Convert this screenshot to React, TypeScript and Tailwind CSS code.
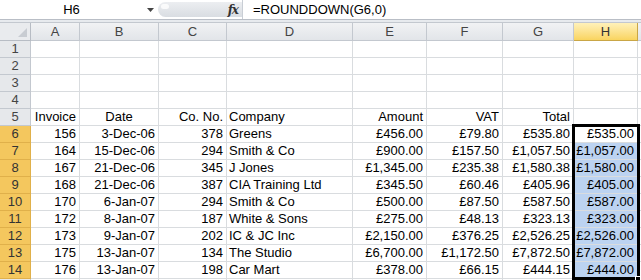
import React from "react";

type Row = { n: number; cells: string[] };

const rows: Row[] = [
  { n: 1, cells: [] },
  { n: 2, cells: [] },
  { n: 3, cells: [] },
  { n: 4, cells: [] },
  { n: 5, cells: ["Invoice", "Date", "Co. No.", "Company", "Amount", "VAT", "Total", ""] },
  { n: 6, cells: ["156", "3-Dec-06", "378", "Greens", "£456.00", "£79.80", "£535.80", "£535.00"] },
  { n: 7, cells: ["164", "15-Dec-06", "294", "Smith & Co", "£900.00", "£157.50", "£1,057.50", "£1,057.00"] },
  { n: 8, cells: ["167", "21-Dec-06", "345", "J Jones", "£1,345.00", "£235.38", "£1,580.38", "£1,580.00"] },
  { n: 9, cells: ["168", "21-Dec-06", "387", "CIA Training Ltd", "£345.50", "£60.46", "£405.96", "£405.00"] },
  { n: 10, cells: ["170", "6-Jan-07", "294", "Smith & Co", "£500.00", "£87.50", "£587.50", "£587.00"] },
  { n: 11, cells: ["172", "8-Jan-07", "187", "White & Sons", "£275.00", "£48.13", "£323.13", "£323.00"] },
  { n: 12, cells: ["173", "9-Jan-07", "202", "IC & JC Inc", "£2,150.00", "£376.25", "£2,526.25", "£2,526.00"] },
  { n: 13, cells: ["175", "13-Jan-07", "134", "The Studio", "£6,700.00", "£1,172.50", "£7,872.50", "£7,872.00"] },
  { n: 14, cells: ["176", "13-Jan-07", "198", "Car Mart", "£378.00", "£66.15", "£444.15", "£444.00"] },
];

const letters = ["A", "B", "C", "D", "E", "F", "G", "H"];
const gridCols = "grid grid-cols-[31px_49px_79px_68px_126px_74px_76px_71px_64px_1fr]";

// column D (index 3) is text, others right aligned; row 5 Date header centred
const align = (row: number, col: number) => {
  if (col === 3) return "justify-start pl-[2px]";
  if (row === 5 && col === 1) return "justify-center";
  return "justify-end pr-[3px]";
};

const FormulaBar = () => (
  <div className="flex h-[20px] border-b border-[#b9bec6] bg-white">
    <div className="w-[143px] flex items-center justify-center text-[13px] text-black">H6</div>
    <div className="w-[15px] flex items-center justify-center">
      <svg width="7" height="4" viewBox="0 0 7 4">
        <path d="M0 0h7L3.5 4z" fill="#444" />
      </svg>
    </div>
    <div className="relative w-[84px] my-[2px] rounded-l-full bg-gradient-to-b from-[#eceef1] to-[#d9dde2] flex items-center justify-end pr-[4px]">
      <div className="absolute left-[3px] top-[2px] w-[8px] h-[5px] rounded-full bg-white/80" />
      <span className="font-['DejaVu_Serif',serif] italic font-bold text-[12px] text-[#333] tracking-[-1px]">fx</span>
    </div>
    <div className="w-[3px] border-l border-[#c9ced5]" />
    <div className="flex-1 flex items-center pl-[8px] text-[13px] text-black">=ROUNDDOWN(G6,0)</div>
  </div>
);

const HeaderRow = () => (
  <div className={`${gridCols} h-[18px]`}>
    <div className="relative bg-[#e9ebee] border-r border-b border-[#b7bcc4]">
      <svg className="absolute right-[3px] bottom-[3px]" width="9" height="9" viewBox="0 0 9 9">
        <path d="M9 0V9H0z" fill="#c8ccd2" />
      </svg>
    </div>
    {letters.map((l) => (
      <div
        key={l}
        className={
          l === "H"
            ? "flex items-center justify-center bg-gradient-to-b from-[#fff1b9] to-[#f9d45e] border-r border-b border-[#c9a646] text-[#333]"
            : "flex items-center justify-center bg-gradient-to-b from-[#f1f2f4] to-[#e2e5e9] border-r border-b border-[#c3c8cf] text-[#444]"
        }
      >
        {l}
      </div>
    ))}
    <div className="bg-gradient-to-b from-[#f1f2f4] to-[#e2e5e9] border-b border-[#c3c8cf]" />
  </div>
);

const App: React.FC = () => {
  return (
    <div className="relative w-[641px] h-[280px] overflow-hidden bg-white font-['Liberation_Sans',Arial,sans-serif] text-[13px] leading-[16px]">
      <FormulaBar />
      <div className="h-[3px] bg-[#e7eaee] border-b border-[#c3c8cf]" />
      <HeaderRow />
      {rows.map((r) => {
        const selected = r.n >= 6 && r.n <= 14;
        return (
          <div key={r.n} className={`${gridCols} h-[17px]`}>
            <div
              className={
                selected
                  ? "flex items-center justify-center bg-[#f4c75e] border-r border-b border-[#e0b04a] text-[#333]"
                  : "flex items-center justify-center bg-[#e6e8eb] border-r border-b border-[#c3c8cf] text-[#444]"
              }
            >
              {r.n}
            </div>
            {letters.map((_, c) => {
              const inH = c === 7;
              const blue = inH && r.n >= 7 && r.n <= 14;
              return (
                <div
                  key={c}
                  className={`flex items-center whitespace-nowrap border-r border-b border-[#d9dcdf] text-black ${align(r.n, c)} ${blue ? "bg-[#bcd3f1]" : ""}`}
                >
                  {r.cells[c] ?? ""}
                </div>
              );
            })}
            <div className="border-b border-[#d9dcdf]" />
          </div>
        );
      })}
      {/* next row peeking under row 14 */}
      <div className={`${gridCols} h-[17px]`}>
        <div className="bg-[#e6e8eb] border-r border-[#c3c8cf]" />
        {letters.map((l) => (
          <div key={l} className="border-r border-[#d9dcdf]" />
        ))}
        <div />
      </div>
      {/* selection box H6:H14 */}
      <div className="absolute left-[572px] top-[124px] w-[68px] h-[156px] border-[3px] border-black pointer-events-none" />
      <div className="absolute left-[635px] top-[276px] w-[6px] h-[6px] bg-black border border-white" />
    </div>
  );
};

export default App;
